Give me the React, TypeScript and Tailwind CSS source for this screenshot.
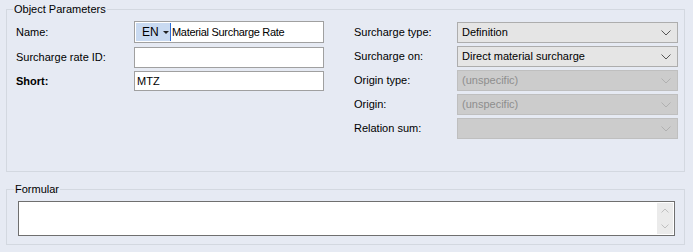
import React from "react";

const Chevron = ({ color }: { color: string }) => (
  <svg width="10" height="6" viewBox="0 0 10 6" className="shrink-0">
    <path d="M0.5 0.5 L5 5 L9.5 0.5" fill="none" stroke={color} strokeWidth="1" />
  </svg>
);

const Combo = ({ value, disabled }: { value?: string; disabled?: boolean }) => (
  <div
    className={
      disabled
        ? "flex h-[21px] w-[221px] items-center justify-between border border-[#bfbfbf] bg-[#cccccc] pl-[4px] pr-[6px] text-[#8e8e8e]"
        : "flex h-[21px] w-[221px] items-center justify-between border border-[#adadad] bg-[#e5e5e5] pl-[4px] pr-[6px] text-black"
    }
  >
    <span className="truncate">{value ?? ""}</span>
    <Chevron color={disabled ? "#b0b0b0" : "#555555"} />
  </div>
);

const Label = ({ children, bold }: { children: React.ReactNode; bold?: boolean }) => (
  <span className={bold ? "font-bold text-black" : "text-black"}>{children}</span>
);

export default function App() {
  return (
    <div
      className="flex h-[252px] w-[693px] flex-col bg-[#e6eaf3] pl-[6px] pt-[3px] text-[11px] leading-[13px] text-black"
      style={{ fontFamily: '"Liberation Sans", Arial, sans-serif' }}
    >
      <fieldset className="h-[169px] w-[679px] border border-[#d3d8e0]">
        <legend className="ml-[6px] px-[1px] text-black">Object Parameters</legend>
        <div className="flex pt-[5px]">
          {/* left column */}
          <div className="flex w-[340px] flex-col pl-[9px]">
            <div className="flex h-[22px] items-center">
              <div className="w-[118px]">
                <Label>Name:</Label>
              </div>
              <div className="flex h-[22px] w-[190px] items-center border border-[#a0a0a0] bg-white">
                <div className="ml-[1px] flex h-[18px] w-[34px] items-center gap-[4px] bg-[#c9daf1] pl-[6px]">
                  <span className="text-[12px]">EN</span>
                  <svg width="6" height="3" viewBox="0 0 6 3">
                    <path d="M0 0 H6 L3 3 Z" fill="#222" />
                  </svg>
                </div>
                <div className="h-[18px] w-[1px] bg-[#2f6fd6]" />
                <span className="pl-[1px] tracking-[-0.3px]">Material Surcharge Rate</span>
              </div>
            </div>
            <div className="mt-[4px] flex h-[21px] items-center">
              <div className="w-[118px]">
                <Label>Surcharge rate ID:</Label>
              </div>
              <div className="h-[21px] w-[190px] border border-[#a0a0a0] bg-white" />
            </div>
            <div className="mt-[3px] flex h-[20px] items-center">
              <div className="w-[118px]">
                <Label bold>Short:</Label>
              </div>
              <div className="flex h-[20px] w-[190px] items-center border border-[#a0a0a0] bg-white pl-[2px]">
                MTZ
              </div>
            </div>
          </div>
          {/* right column */}
          <div className="flex flex-col gap-[3px] pl-[7px] pt-[1px]">
            <div className="flex items-center">
              <div className="w-[103px]"><Label>Surcharge type:</Label></div>
              <Combo value="Definition" />
            </div>
            <div className="flex items-center">
              <div className="w-[103px]"><Label>Surcharge on:</Label></div>
              <Combo value="Direct material surcharge" />
            </div>
            <div className="flex items-center">
              <div className="w-[103px]"><Label>Origin type:</Label></div>
              <Combo value="(unspecific)" disabled />
            </div>
            <div className="flex items-center">
              <div className="w-[103px]"><Label>Origin:</Label></div>
              <Combo value="(unspecific)" disabled />
            </div>
            <div className="flex items-center">
              <div className="w-[103px]"><Label>Relation sum:</Label></div>
              <Combo disabled />
            </div>
          </div>
        </div>
      </fieldset>

      <fieldset className="mt-[11px] h-[62px] w-[679px] border border-[#d3d8e0]">
        <legend className="ml-[7px] px-[1px] text-black">Formular</legend>
        <div className="ml-[11px] mt-[5px] flex h-[35px] w-[657px] justify-end border border-[#6f6f6f] bg-white p-[1px]">
          <div className="flex w-[16px] flex-col items-center justify-around bg-[#ebebeb]">
            <svg width="8" height="5" viewBox="0 0 8 5">
              <path d="M0.5 4.5 L4 1 L7.5 4.5" fill="none" stroke="#c0c0c0" strokeWidth="1" />
            </svg>
            <svg width="8" height="5" viewBox="0 0 8 5">
              <path d="M0.5 0.5 L4 4 L7.5 0.5" fill="none" stroke="#c0c0c0" strokeWidth="1" />
            </svg>
          </div>
        </div>
      </fieldset>
    </div>
  );
}
